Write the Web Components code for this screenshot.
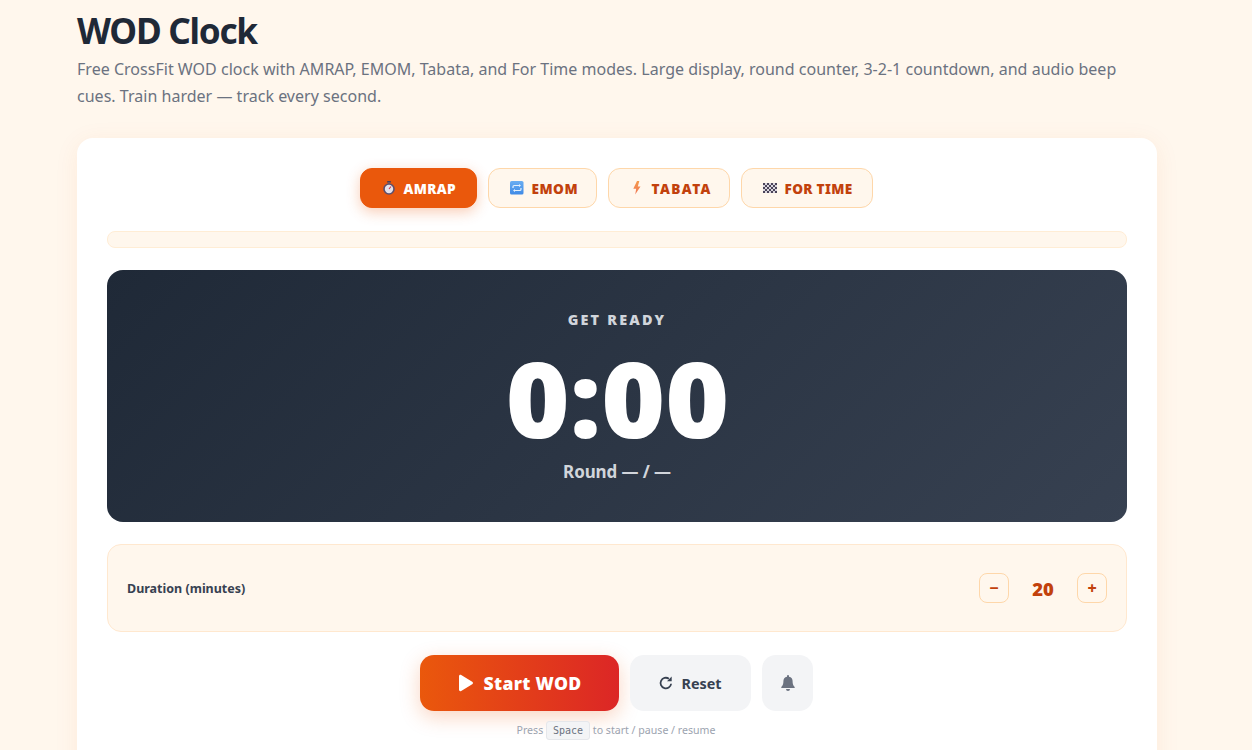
<!DOCTYPE html>
<html lang="en">
<head>
<meta charset="utf-8">
<title>WOD Clock</title>
<style>
  html, body { margin: 0; padding: 0; background: #fff7ed; }
  body { font-family: "Noto Sans", sans-serif; color: #1f2937; }
</style>
</head>
<body>
<wod-page>
  <wod-card>
    <wod-tabs>
      <wod-tab active icon="watch" style="width:117px;--ls:.35px">AMRAP</wod-tab>
      <wod-tab icon="repeat" style="width:109px;--ls:.5px">EMOM</wod-tab>
      <wod-tab icon="bolt" style="width:122px;--ls:1.4px">TABATA</wod-tab>
      <wod-tab icon="flag" style="width:132px;--ls:.3px">FOR TIME</wod-tab>
    </wod-tabs>
    <wod-progress></wod-progress>
    <wod-display label="GET READY" time="0:00" round="Round — / —"></wod-display>
    <wod-setting label="Duration (minutes)" value="20"></wod-setting>
    <wod-actions></wod-actions>
  </wod-card>
</wod-page>

<script>
function define(name, css, html) {
  customElements.define(name, class extends HTMLElement {
    constructor() {
      super();
      const root = this.attachShadow({ mode: 'open' });
      root.innerHTML = `<style>${css}</style>${typeof html === 'function' ? html(this) : html}`;
    }
  });
}

// emoji on the reference are a different set, so they are drawn here
let checks = '';
for (let y = 0; y < 5; y++)
  for (let x = 0; x < 7; x++)
    checks += `<rect x="${x * 2}" y="${y * 2 + 2}" width="2" height="2" fill="${(x + y) % 2 ? '#d9d6de' : '#4b4459'}"/>`;

const icons = {
  watch: `<svg width="14" height="14" viewBox="0 0 14 14"><rect x="5.200" y="0" width="3.600" height="1.600" fill="#4b3f57"/><rect x="6.300" y="1" width="1.400" height="2" fill="#6b5f78"/><circle cx="7" cy="8" r="5.800" fill="#5d4f6d"/><circle cx="7" cy="8" r="4.200" fill="#e6e2ea"/><path d="M7 8L9 5.500" stroke="#d8344a" stroke-width="1.200"/></svg>`,
  repeat: `<svg width="14" height="14" viewBox="0 0 14 14"><defs><linearGradient id="b" x1="0" y1="0" x2="0" y2="1"><stop offset="0" stop-color="#6aaef2"/><stop offset="1" stop-color="#3f8ae6"/></linearGradient></defs><rect width="13.500" height="13.500" rx="1.600" fill="url(#b)"/><path d="M3 7V5.800c0-.8.600-1.300 1.300-1.300h5.200M11 7v1.200c0 .8-.6 1.300-1.300 1.300H4.500" fill="none" stroke="#e3f0fd" stroke-width="1.200"/><path d="M9 3l2 1.500L9 6zM5 8l-2 1.500L5 11z" fill="#e3f0fd"/></svg>`,
  bolt: `<svg width="14" height="14" viewBox="0 0 14 14"><defs><linearGradient id="o" x1="0" y1="0" x2="0" y2="1"><stop offset="0" stop-color="#f59a4a"/><stop offset="1" stop-color="#f0785a"/></linearGradient></defs><path d="M7 0L3.300 7.700H6.200L5.200 13.500 10.500 5.400H7.800L9.300 0z" fill="url(#o)"/></svg>`,
  flag: `<svg width="14" height="14" viewBox="0 0 14 14">${checks}</svg>`
};

define('wod-page', `
  :host { display: block; width: 1234px; height: 750px; overflow: hidden; box-sizing: border-box; }
  .wrap { width: 1080px; margin: 0 auto; }
  h1 { margin: 0; padding-top: 8px; font-size: 35.2px; line-height: 44px; font-weight: 700; color: #1f2937; letter-spacing: -1.3px; }
  p { margin: 4px 0 28px; max-width: 1060px; font-size: 16px; line-height: 27.2px; color: #6b7280; letter-spacing: .02px; }
`, `<div class="wrap">
  <h1>WOD Clock</h1>
  <p>Free CrossFit WOD clock with AMRAP, EMOM, Tabata, and For Time modes. Large display, round counter, 3-2-1 countdown, and audio beep cues. Train harder — track every second.</p>
  <slot></slot>
</div>`);

define('wod-card', `
  :host { display: flex; flex-direction: column; box-sizing: border-box; height: 660px; padding: 30px; background: #fff; border-radius: 16px; box-shadow: 0 4px 24px rgba(234, 88, 12, .08); }
`, `<slot></slot>`);

define('wod-tabs', `
  :host { display: flex; justify-content: center; gap: 11px; margin-bottom: 23px; padding-right: 1px; }
`, `<slot></slot>`);

define('wod-tab', `
  :host { display: inline-flex; align-items: center; gap: 7.5px; box-sizing: border-box; height: 40px; padding: 0 0 0 21px; border: 1px solid #fed7aa; border-radius: 12px; background: #fff7ed; color: #c2410c; font-size: 13.6px; font-weight: 900; letter-spacing: var(--ls); white-space: nowrap; }
  :host([active]) { background: #ea580c; border-color: #ea580c; color: #fff; box-shadow: 0 4px 14px rgba(234, 88, 12, .3); }
  svg { display: block; flex: none; }
`, el => `${icons[el.getAttribute('icon')]}<slot></slot>`);

define('wod-progress', `
  :host { display: block; box-sizing: border-box; height: 17px; margin-bottom: 22px; border: 1px solid #ffedd5; border-radius: 8px; background: #fff7ed; }
`, ``);

define('wod-display', `
  :host { display: flex; flex-direction: column; align-items: center; box-sizing: border-box; height: 252px; margin-bottom: 22px; padding-top: 40px; border-radius: 16px; background: linear-gradient(135deg, #1f2937, #374151); color: #fff; }
  .label { font-size: 14.4px; line-height: 20px; font-weight: 900; letter-spacing: 2.2px; color: #d1d5db; }
  .time { margin-top: 12px; font-size: 104px; line-height: 112px; font-weight: 900; color: #fff; transform: scaleX(1.05); }
  .round { margin-top: 6px; font-size: 17px; line-height: 24px; font-weight: 700; color: #d1d5db; letter-spacing: -.1px; }
`, el => `<div class="label">${el.getAttribute('label')}</div>
  <div class="time">${el.getAttribute('time')}</div>
  <div class="round">${el.getAttribute('round')}</div>`);

define('wod-setting', `
  :host { display: flex; align-items: center; justify-content: space-between; box-sizing: border-box; height: 88px; margin-bottom: 23px; padding: 0 19px; border: 1px solid #ffe8cf; border-radius: 14px; background: #fff7ed; }
  .label { font-size: 12.5px; font-weight: 700; color: #374151; }
  .ctrl { display: flex; align-items: center; }
  button { box-sizing: border-box; width: 30px; height: 30px; padding: 0; border: 1px solid #fed7aa; border-radius: 8px; background: #fff7ed; color: #c2410c; font: 800 16px "Noto Sans", sans-serif; }
  .val { width: 68px; text-align: center; font-size: 18.4px; font-weight: 900; color: #c2410c; }
`, el => `<span class="label">${el.getAttribute('label')}</span>
  <div class="ctrl"><button>−</button><span class="val">${el.getAttribute('value')}</span><button>+</button></div>`);

define('wod-actions', `
  :host { display: block; }
  .row { display: flex; justify-content: center; gap: 11px; padding-right: 1px; }
  button { display: inline-flex; align-items: center; justify-content: center; box-sizing: border-box; height: 56px; border: 0; border-radius: 14px; font-family: "Noto Sans", sans-serif; }
  .start { width: 199px; gap: 10px; background: linear-gradient(90deg, #ea580c, #dc2626); color: #fff; font-size: 17.6px; font-weight: 900; letter-spacing: .3px; box-shadow: 0 6px 20px rgba(234, 88, 12, .25); }
  .reset { width: 121px; gap: 8px; background: #f3f4f6; color: #374151; font-size: 14.4px; font-weight: 700; }
  .bell { width: 51px; background: #f3f4f6; color: #6b7280; }
  svg { display: block; }
  .hint { margin-top: 10px; text-align: center; font-size: 10.6px; line-height: 19px; color: #9ca3af; padding-right: 2px; }
  kbd { display: inline-block; box-sizing: border-box; height: 19px; padding: 0 6px; border: 1px solid #e5e7eb; border-radius: 3px; background: #f3f4f6; color: #6b7280; font: 10px/17px "DejaVu Sans Mono", monospace; }
`, `<div class="row">
    <button class="start"><svg width="16" height="18" viewBox="0 0 16 18"><path d="M1 2.200C1 1 2.200.4 3.200 1l11 6.700c1 .6 1 2 0 2.600l-11 6.700C2.200 17.600 1 17 1 15.800z" fill="currentColor"/></svg>Start WOD</button>
    <button class="reset"><svg width="14" height="14" viewBox="0 0 15 15" fill="none" stroke="currentColor" stroke-width="1.900"><path d="M13 8.300A5.700 5.700 0 1 1 10.600 2.900"/><path d="M13.600.6v5h-5z" stroke="none" fill="currentColor"/></svg>Reset</button>
    <button class="bell"><svg width="14" height="16" viewBox="0 0 14 16"><path d="M7 0a1 1 0 0 1 1 1v.7A4.600 4.600 0 0 1 11.600 6.300c0 3.700 1.400 4.900 2 5.600.4.500.1 1.100-.6 1.100H1c-.7 0-1-.6-.6-1.100.6-.7 2-1.900 2-5.600A4.600 4.600 0 0 1 6 1.700V1a1 1 0 0 1 1-1zM5 14h4a2 2 0 0 1-4 0z" fill="currentColor"/></svg></button>
  </div>
  <div class="hint">Press <kbd>Space</kbd> to start / pause / resume</div>`);
</script>
</body>
</html>
